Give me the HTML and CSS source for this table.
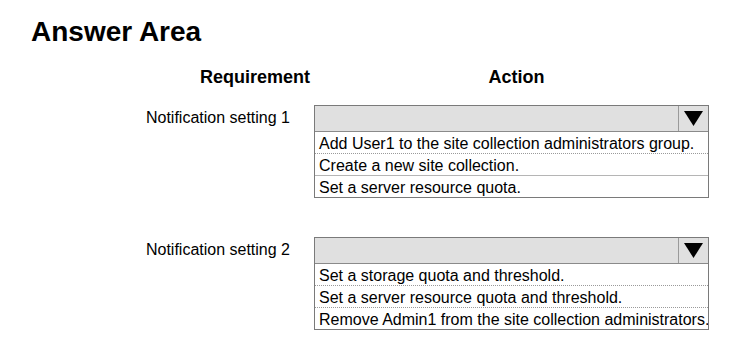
FILE: index.html
```html
<!DOCTYPE html>
<html lang="en">
<head>
  <meta charset="UTF-8">
  <title>Answer Area</title>
  <link rel="stylesheet" href="styles.css">
</head>
<body>

  <div class="page">
    <h1 class="title">Answer Area</h1>

    <!-- Column headings -->
    <div class="row head-row">
      <div class="head req-head">Requirement</div>
      <div class="head action-head">Action</div>
    </div>

    <!-- Setting 1 -->
    <div class="row item-row">
      <div class="label">Notification setting 1</div>
      <div class="dropdown">
        <div class="dd-head">
          <div class="dd-arrow">
            <svg width="19" height="15" viewBox="0 0 19 15"><polygon points="0,0 19,0 9.5,15" fill="#000"/></svg>
          </div>
        </div>
        <div class="option dotted">Add User1 to the site collection administrators group.</div>
        <div class="option solid">Create a new site collection.</div>
        <div class="option solid">Set a server resource quota.</div>
      </div>
    </div>

    <!-- Setting 2 -->
    <div class="row item-row">
      <div class="label">Notification setting 2</div>
      <div class="dropdown">
        <div class="dd-head">
          <div class="dd-arrow">
            <svg width="19" height="15" viewBox="0 0 19 15"><polygon points="0,0 19,0 9.5,15" fill="#000"/></svg>
          </div>
        </div>
        <div class="option dotted">Set a storage quota and threshold.</div>
        <div class="option dotted">Set a server resource quota and threshold.</div>
        <div class="option dotted">Remove Admin1 from the site collection administrators.</div>
      </div>
    </div>
  </div>

</body>
</html>
```

FILE: styles.css
```css
body {
  margin: 0;
  font-family: "Liberation Sans", Arial, sans-serif;
  color: #000;
  background: #fff;
}

.page {
  padding: 16px 0 0 31px;
}

.title {
  margin: 0;
  font-size: 28px;
  line-height: 32px;
  font-weight: bold;
}

/* Two column rows */
.row {
  display: grid;
  grid-template-columns: 184px 395px;
  column-gap: 4px;
  margin-left: 95px;
}

.head-row {
  margin-top: 17px;
  margin-bottom: 16px;
}

.item-row + .item-row {
  margin-top: 39px;
}

.head {
  font-size: 18px;
  font-weight: bold;
  line-height: 24px;
}

.req-head {
  text-align: right;
}

.action-head {
  text-align: center;
  padding-left: 10px;
}

.label {
  font-size: 16px;
  line-height: 26px;
  text-align: right;
  padding-right: 20px;
}

/* Dropdown box */
.dropdown {
  border: 1px solid #7a7a7a;
  box-sizing: border-box;
  width: 395px;
}

.dd-head {
  height: 25px;
  background-color: #e0e0e0;
  display: flex;
  justify-content: flex-end;
}

.dd-arrow {
  width: 29px;
  border-left: 1px solid #9a9a9a;
  display: flex;
  align-items: center;
  justify-content: center;
}

.option {
  font-size: 16px;
  line-height: 19px;
  padding: 2px 0 0 4px;
  white-space: nowrap;
  overflow: hidden;
  border-top: 1px solid #8a8a8a;
}

.option.dotted + .option.dotted,
.option.dotted + .option.solid {
  border-top: 1px dotted #9a9a9a;
}

.option.solid + .option.solid {
  border-top: 1px solid #b5b5b5;
}
```
